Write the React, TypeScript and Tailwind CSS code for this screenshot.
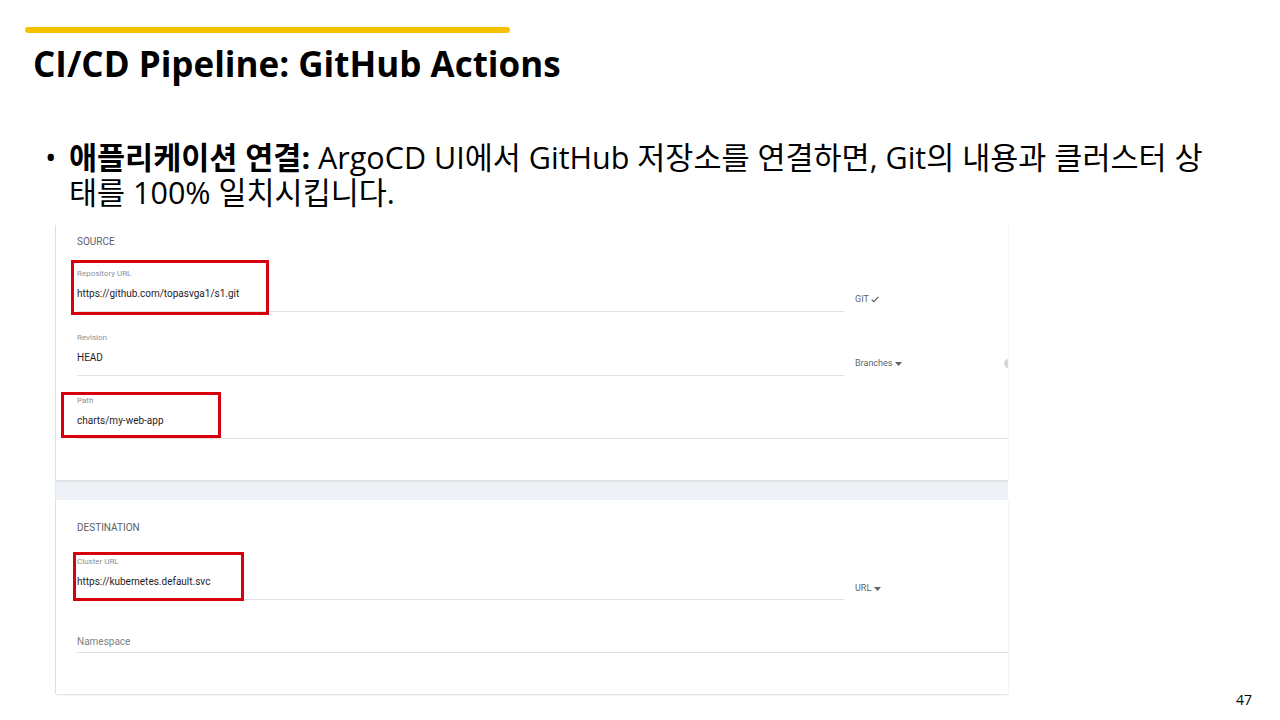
import React from 'react';

const slideFont = { fontFamily: '"Open Sans", "Noto Sans CJK KR", sans-serif' };

function Caret() {
  return (
    <svg width="7" height="4" viewBox="0 0 7 4" className="ml-[3px] inline-block">
      <path d="M0 0 L7 0 L3.5 4 Z" fill="#5f6468" />
    </svg>
  );
}

function Check() {
  return (
    <svg width="8" height="7" viewBox="0 0 8 7" className="ml-[2px] inline-block">
      <path d="M0.7 3.6 L2.9 5.8 L7.3 0.8" fill="none" stroke="#4a4f54" strokeWidth="1.1" />
    </svg>
  );
}

interface FieldProps {
  label: string;
  value: string;
  className?: string;
}

function Field({ label, value, className = '' }: FieldProps) {
  return (
    <div className={`border-b border-[#dfe2e5] pb-[10px] ${className}`}>
      <div className="text-[8px] leading-[10px] text-[#8c9196]">{label}</div>
      <div className="mt-[8px] text-[10px] leading-[14px] text-[#1f2326]">{value}</div>
    </div>
  );
}

function ArgoForm() {
  return (
    <div
      className="relative ml-[55px] mt-[15px] w-[953px] border-l border-[#e6e9ec] bg-[#eef2f6]"
      style={{ fontFamily: 'Roboto, "Liberation Sans", sans-serif' }}
    >
      {/* source card */}
      <div className="h-[255px] bg-white pl-[21px] pt-[11px] shadow-[0_1px_2px_rgba(0,0,0,0.12)]">
        <div className="text-[10px] leading-[12px] text-[#5b6066]">SOURCE</div>

        <div className="mt-[21px] flex">
          <Field label="Repository URL" value="https://github.com/topasvga1/s1.git" className="w-[767px]" />
          <div className="ml-[11px] flex items-center pt-[18px] text-[9px] text-[#5f6468]">
            GIT
            <Check />
          </div>
        </div>

        <div className="mt-[21px] flex">
          <Field label="Revision" value="HEAD" className="w-[767px]" />
          <div className="ml-[11px] flex flex-1 items-center overflow-hidden pt-[18px] text-[9px] text-[#5f6468]">
            Branches
            <Caret />
            <div className="ml-auto mr-[-5px] h-[9px] w-[9px] rounded-full bg-[#d6d9dc]" />
          </div>
        </div>

        <Field label="Path" value="charts/my-web-app" className="mt-[20px]" />
      </div>

      {/* destination card */}
      <div className="mt-[20px] h-[194px] bg-white pl-[21px] pt-[22px] shadow-[0_1px_2px_rgba(0,0,0,0.14)]">
        <div className="text-[10px] leading-[12px] text-[#5b6066]">DESTINATION</div>

        <div className="mt-[23px] flex">
          <Field label="Cluster URL" value="https://kubernetes.default.svc" className="w-[767px]" />
          <div className="ml-[11px] flex items-center pt-[20px] text-[9px] text-[#5f6468]">
            URL
            <Caret />
          </div>
        </div>

        <div className="mt-[35px] border-b border-[#dfe2e5] pb-[3px] text-[10px] leading-[14px] text-[#7d8287]">
          Namespace
        </div>
      </div>

      {/* annotation boxes */}
      <div className="absolute left-[15px] top-[35px] h-[55px] w-[198px] border-[3px] border-[#d9000d]" />
      <div className="absolute left-[5px] top-[167px] h-[46px] w-[160px] border-[3px] border-[#d9000d]" />
      <div className="absolute left-[17px] top-[327px] h-[49px] w-[171px] border-[3px] border-[#d9000d]" />
    </div>
  );
}

export default function App() {
  return (
    <div className="relative h-[720px] w-[1280px] overflow-hidden bg-white" style={slideFont}>
      <div className="ml-[25px] pt-[27px]">
        <div className="h-[6px] w-[485px] rounded-full bg-[#f8c200]" />
      </div>

      <h1 className="ml-[33px] mt-[8px] text-[35px] font-bold leading-[46px] text-black">
        CI/CD Pipeline: GitHub Actions
      </h1>

      <div className="ml-[45px] mt-[53px] flex text-[30.5px] leading-[35px] text-black">
        <span className="w-[24px]">•</span>
        <p className="whitespace-nowrap">
          <b>애플리케이션 연결:</b> ArgoCD UI에서 GitHub 저장소를 연결하면, Git의 내용과 클러스터 상
          <br />
          태를 100% 일치시킵니다.
        </p>
      </div>

      <ArgoForm />

      <div className="absolute bottom-[12px] right-[28px] text-[14px] leading-[16px] text-black">47</div>
    </div>
  );
}
